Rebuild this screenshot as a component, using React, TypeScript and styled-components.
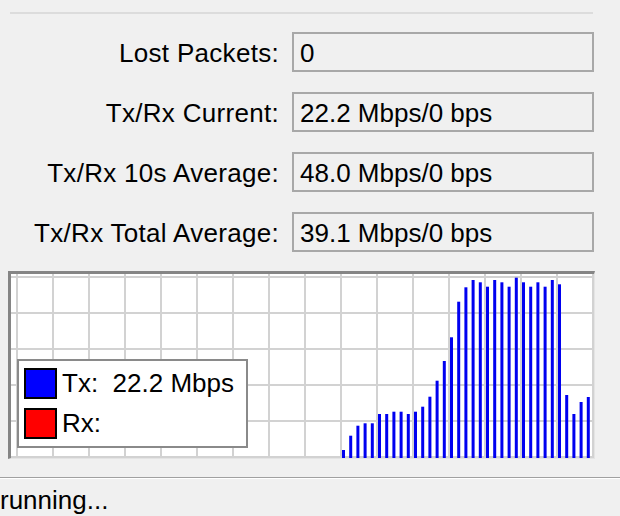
import React, { FC } from "react";
import styled, { createGlobalStyle } from "styled-components";

const GlobalStyle = createGlobalStyle`
  body {
    margin: 0;
    background-color: #f0f0f0;
    font-family: "Liberation Sans", Arial, sans-serif;
    color: #000;
  }
`;

const Window = styled.div`
  width: 620px;
  height: 516px;
  overflow: hidden;
  display: flex;
  flex-direction: column;
  font-size: 26px;
`;

const TopRule = styled.div`
  margin: 12px 27px 0 10px;
  border-top: 2px solid #dcdcdc;
`;

const Fields = styled.div`
  display: grid;
  grid-template-columns: 279px 302px;
  grid-auto-rows: 40px;
  column-gap: 13px;
  row-gap: 20px;
  margin-top: 18px;
`;

const Label = styled.div`
  text-align: right;
  line-height: 42px;
  letter-spacing: 0.3px;
  white-space: nowrap;
`;

const Value = styled.div`
  box-sizing: border-box;
  border: 2px solid #a8a8a8;
  background-color: #f0f0f0;
  padding-left: 6px;
  line-height: 38px;
  white-space: nowrap;
`;

const Chart = styled.div`
  position: relative;
  box-sizing: border-box;
  margin: 19px 0 0 8px;
  width: 587px;
  height: 188px;
  border-top: 3px solid #858585;
  border-left: 3px solid #858585;
  border-right: 1px solid #e4e4e4;
  border-bottom: 1px solid #e4e4e4;
  background-color: #fff;
`;

const Plot = styled.svg`
  display: block;
  width: 583px;
  height: 184px;
`;

const Legend = styled.div`
  position: absolute;
  left: 6px;
  top: 85px;
  box-sizing: border-box;
  width: 231px;
  height: 89px;
  border: 2px solid #8a8a8a;
  background-color: #fff;
  padding: 7px 0 0 5px;
  display: flex;
  flex-direction: column;
  gap: 9px;
`;

const LegendRow = styled.div`
  display: flex;
  align-items: center;
  gap: 5px;
  height: 31px;
  white-space: pre;
`;

const Swatch = styled.span<{ color: string }>`
  box-sizing: border-box;
  width: 33px;
  height: 31px;
  border: 2px solid #000;
  background-color: ${({ color }) => color};
`;

const StatusRule = styled.div`
  margin-top: 18px;
  border-top: 1px solid #a0a0a0;
  border-bottom: 1px solid #fff;
`;

const Status = styled.div`
  padding-top: 6px;
  line-height: 30px;
`;

interface IRow {
  label: string;
  value: string;
}

const rows: IRow[] = [
  { label: "Lost Packets:", value: "0" },
  { label: "Tx/Rx Current:", value: "22.2 Mbps/0 bps" },
  { label: "Tx/Rx 10s Average:", value: "48.0 Mbps/0 bps" },
  { label: "Tx/Rx Total Average:", value: "39.1 Mbps/0 bps" }
];

// bar tops in page pixels, read off the reference
const txTops: number[] = [
  450, 435.7, 425.7, 423.3, 423.3, 414, 414, 411.7, 411.7, 414, 411.7, 406.7, 396.7, 380.7, 361, 337.3,
  301.7, 287.3, 280, 282.3, 286.7, 280, 282.3, 286.7, 277.7, 282.3, 286.7, 282.3, 286.7, 280, 284.3, 395,
  414, 402, 397
];

const PLOT_TOP = 274;
const PLOT_W = 583;
const PLOT_H = 184;

const App: FC = () => {
  const vLines = Array.from({ length: 17 }, (_, k) => 6 + 36 * k);
  const hLines = Array.from({ length: 6 }, (_, k) => 3 + 36 * k);

  return (
    <Window>
      <GlobalStyle />
      <TopRule />
      <Fields>
        {rows.map((row) => (
          <React.Fragment key={row.label}>
            <Label>{row.label}</Label>
            <Value>{row.value}</Value>
          </React.Fragment>
        ))}
      </Fields>
      <Chart>
        <Plot viewBox={`0 0 ${PLOT_W} ${PLOT_H}`}>
          {vLines.map((x) => (
            <line key={`v${x}`} x1={x} y1={0} x2={x} y2={PLOT_H} stroke="#d2d2d2" strokeWidth={2} />
          ))}
          {hLines.map((y) => (
            <line key={`h${y}`} x1={0} y1={y} x2={PLOT_W} y2={y} stroke="#d2d2d2" strokeWidth={2} />
          ))}
          {txTops.map((top, i) => (
            <rect
              key={i}
              x={331 + 7.2 * i}
              y={top - PLOT_TOP}
              width={3}
              height={PLOT_H - (top - PLOT_TOP)}
              fill="#0000f0"
            />
          ))}
        </Plot>
        <Legend>
          <LegendRow>
            <Swatch color="#0000ff" />
            Tx:  22.2 Mbps
          </LegendRow>
          <LegendRow>
            <Swatch color="#ff0000" />
            Rx:
          </LegendRow>
        </Legend>
      </Chart>
      <StatusRule />
      <Status>running...</Status>
    </Window>
  );
};

export default App;
